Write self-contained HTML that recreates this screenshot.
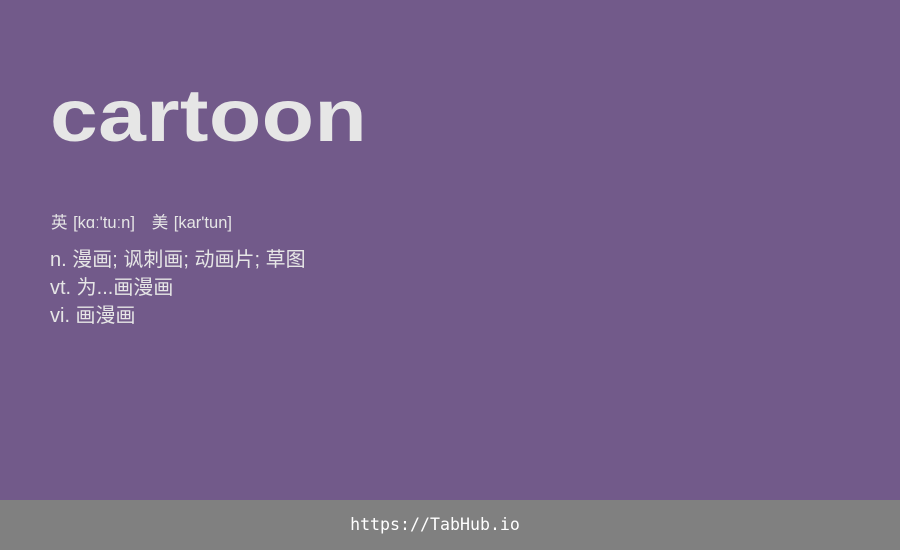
<!DOCTYPE html>
<html><head><meta charset="utf-8"><style>
html,body{margin:0;padding:0;width:900px;height:550px;overflow:hidden;background:#725a8a;}
.w{position:absolute;left:50px;top:79px;font:bold 74px "Liberation Sans",sans-serif;color:#e6e6e6;line-height:74px;transform:scaleX(1.16);transform-origin:0 0;letter-spacing:0.3px;}
.ph{position:absolute;left:51px;top:209px;font:16.5px "Liberation Sans","Noto Sans CJK SC",sans-serif;color:#e6e6e6;word-spacing:1px;}
.def{position:absolute;left:50px;top:246px;font:20px "Liberation Sans","Noto Sans CJK SC",sans-serif;color:#e6e6e6;line-height:28px;}
.f{position:absolute;left:0;top:500px;width:870px;padding-right:30px;height:50px;background:#808080;color:#fff;font:16.6px "DejaVu Sans Mono",monospace;text-align:center;line-height:50px;}
</style></head><body>
<div class="w">cartoon</div>
<div class="ph">英 [kɑː'tuːn]&nbsp;&nbsp;&nbsp;美 [kar'tun]</div>
<div class="def">n. 漫画; 讽刺画; 动画片; 草图<br>vt. 为...画漫画<br>vi. 画漫画</div>
<div class="f">https://TabHub.io</div>
</body></html>
